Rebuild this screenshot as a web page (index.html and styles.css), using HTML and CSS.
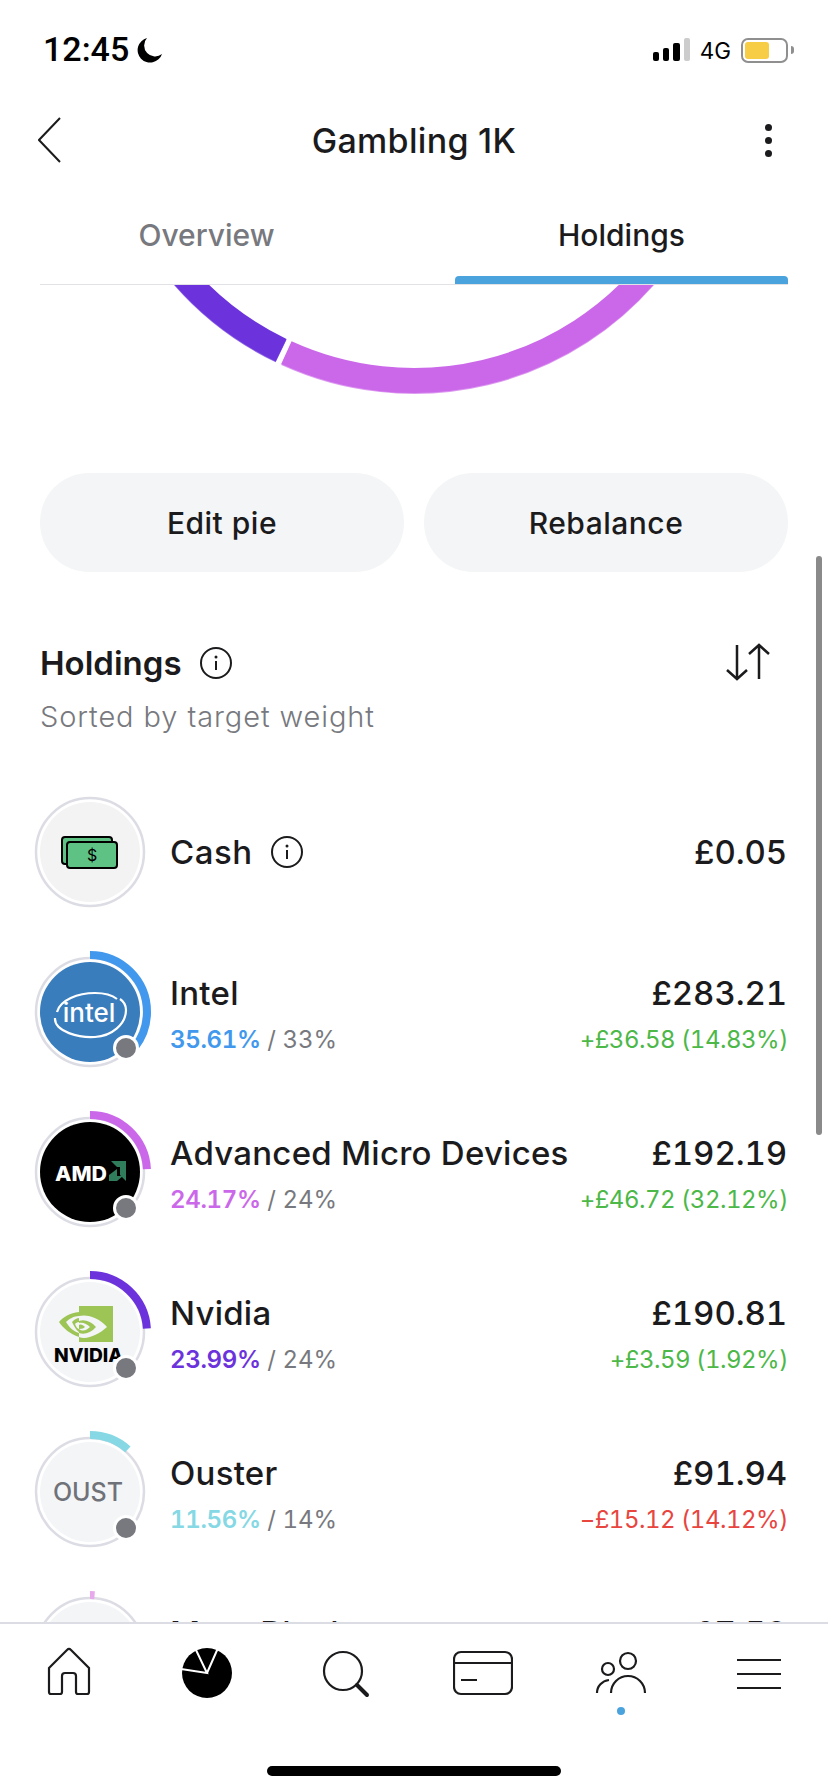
FILE: index.html
```html
<!DOCTYPE html>
<html lang="en">
<head>
    <meta charset="UTF-8">
    <meta name="viewport" content="width=device-width, initial-scale=1.0">
    <title>Gambling 1K</title>
    <link rel="stylesheet" href="styles.css">
</head>
<body>
<div class="phone">
    <!-- Status bar -->
    <header class="status-bar">
        <div class="status-left">
            <span class="clock">12:45</span>
            <svg class="moon" width="26" height="26" viewBox="0 0 26 26"><path d="M10 1 A12.5 12.5 0 1 0 25 17 A11 11 0 0 1 10 1 Z" fill="#000"/></svg>
        </div>
        <div class="status-right">
            <svg width="38" height="24" viewBox="0 0 38 24">
                <rect x="0" y="14" width="6" height="9" rx="2" fill="#000"/>
                <rect x="10" y="10" width="6" height="13" rx="2" fill="#000"/>
                <rect x="20" y="5" width="7" height="18" rx="2" fill="#000"/>
                <rect x="31" y="0" width="6" height="23" rx="2" fill="#ccc"/>
            </svg>
            <span class="network">4G</span>
            <div class="battery"><div class="battery-fill"></div></div>
            <div class="battery-nub"></div>
        </div>
    </header>

    <!-- Title -->
    <div class="title-bar">
        <svg class="back" width="24" height="46" viewBox="0 0 24 46"><path d="M22 1 L1 23 L22 45" fill="none" stroke="#1b1b1d" stroke-width="2"/></svg>
        <h1 class="title">Gambling 1K</h1>
        <div class="more"><span></span><span></span><span></span></div>
    </div>

    <!-- Tabs -->
    <nav class="tabs">
        <div class="tab">Overview</div>
        <div class="tab tab-active">Holdings<div class="tab-bar"></div></div>
    </nav>

    <main class="scroll">
        <div class="scrollbar"></div>

        <svg class="donut" width="828" height="115" viewBox="0 0 828 115" fill="none">
            <g transform="translate(0 0.9)">
                <path d="M174.3 -20 A306.5 306.5 0 0 0 281.1 65.2" stroke="#9670e6" stroke-width="25"/>
                <path d="M286.4 67.7 A306.5 306.5 0 0 0 653.7 -20" stroke="#dd9cf0" stroke-width="25"/>
            </g>
            <path d="M174.3 -20 A306.5 306.5 0 0 0 281.1 65.2" stroke="#6c33dd" stroke-width="25"/>
            <path d="M286.4 67.7 A306.5 306.5 0 0 0 653.7 -20" stroke="#cb68ea" stroke-width="25"/>
        </svg>

        <div class="actions">
            <button class="pill">Edit pie</button>
            <button class="pill">Rebalance</button>
        </div>

        <section class="holdings-head">
            <div>
                <div class="head-line">
                    <h2>Holdings</h2>
                    <svg class="info" width="32" height="32" viewBox="0 0 32 32"><circle cx="16" cy="16" r="15" fill="none" stroke="#1b1b1d" stroke-width="2"/><circle cx="16" cy="10" r="1.5" fill="#1b1b1d"/><path d="M16 14 V23" stroke="#1b1b1d" stroke-width="2"/></svg>
                </div>
                <p class="sorted">Sorted by target weight</p>
            </div>
            <svg class="sort" width="46" height="40" viewBox="0 0 46 40" fill="none" stroke="#1b1b1d" stroke-width="2.5">
                <path d="M11 2 V36 M1 27 L11 36 L21 27"/>
                <path d="M33 36 V2 M23 11 L33 2 L43 11"/>
            </svg>
        </section>

        <div class="rows">
            <!-- Cash -->
            <div class="row">
                <div class="avatar">
                    <svg width="130" height="130" viewBox="-65 -65 130 130">
                        <circle r="54" class="ring"/>
                        <circle r="50" fill="#f3f3f4"/>
                        <rect x="-28" y="-15" width="50" height="27" rx="3" fill="#5fc285" stroke="#000" stroke-width="2"/>
                        <rect x="-23" y="-10" width="50" height="26" rx="3" fill="#5fc285" stroke="#000" stroke-width="2"/>
                        <text x="2" y="9" class="cash-sign">$</text>
                    </svg>
                </div>
                <div class="cash-name">Cash
                    <svg class="info" width="32" height="32" viewBox="0 0 32 32"><circle cx="16" cy="16" r="15" fill="none" stroke="#1b1b1d" stroke-width="2"/><circle cx="16" cy="10" r="1.5" fill="#1b1b1d"/><path d="M16 14 V23" stroke="#1b1b1d" stroke-width="2"/></svg>
                </div>
                <div class="price">£0.05</div>
            </div>

            <!-- Intel -->
            <div class="row">
                <div class="avatar">
                    <svg width="130" height="130" viewBox="-65 -65 130 130">
                        <circle r="54" class="ring"/>
                        <circle r="50" fill="#3a7dbd"/>
                        <path d="M-33 0 C-30 -12 -12 -19 5 -19 C14 -19 22 -17 27 -13" fill="none" stroke="#fff" stroke-width="2.2"/>
                        <path d="M-35 6 C-36 20 -10 26 5 25 C22 24 36 12 36 -2 C36 -7 33 -11 30 -13" fill="none" stroke="#fff" stroke-width="2.2"/>
                        <text x="-1" y="10" class="logo-intel">intel</text>
                        <circle r="57" class="arc" stroke="#4198ec" stroke-dasharray="35.61 100" pathLength="100" transform="rotate(-90)"/>
                    </svg>
                    <span class="badge"></span>
                </div>
                <div class="row-text">
                    <div class="name">Intel</div>
                    <div class="sub"><b class="c-blue">35.61%</b> / 33%</div>
                </div>
                <div class="row-values">
                    <div class="price">£283.21</div>
                    <div class="change up">+£36.58 (14.83%)</div>
                </div>
            </div>

            <!-- AMD -->
            <div class="row">
                <div class="avatar">
                    <svg width="130" height="130" viewBox="-65 -65 130 130">
                        <circle r="54" class="ring"/>
                        <circle r="50" fill="#000"/>
                        <text x="-35" y="9" class="logo-amd" textLength="52" lengthAdjust="spacingAndGlyphs">AMD</text>
                        <path d="M21 -11 H36 V9 L30 3 V-5 H27 Z" fill="#2f7d5b"/>
                        <path d="M27 -3 V4 H33 L27 9 H19 V3 Z" fill="#2f7d5b"/>
                        <circle r="57" class="arc" stroke="#cb68ea" stroke-dasharray="24.17 100" pathLength="100" transform="rotate(-90)"/>
                    </svg>
                    <span class="badge"></span>
                </div>
                <div class="row-text">
                    <div class="name">Advanced Micro Devices</div>
                    <div class="sub"><b class="c-pink">24.17%</b> / 24%</div>
                </div>
                <div class="row-values">
                    <div class="price">£192.19</div>
                    <div class="change up">+£46.72 (32.12%)</div>
                </div>
            </div>

            <!-- Nvidia -->
            <div class="row">
                <div class="avatar">
                    <svg width="130" height="130" viewBox="-65 -65 130 130">
                        <circle r="54" class="ring"/>
                        <circle r="50" fill="#f4f5f7"/>
                        <rect x="-11" y="-26" width="34" height="36" fill="#9cc556"/>
                        <path d="M-11 -20 C-20 -19 -27 -15 -31 -10 C-27 -4 -20 2 -11 5 V1 C-17 -1 -21 -5 -24 -10 C-21 -13 -16 -16 -11 -16 Z" fill="#9cc556"/>
                        <path d="M-11 -16 C-2 -18 9 -14 17 -5 C8 3 -3 8 -11 5 V1 C-6 3 1 1 6 -5 C1 -11 -6 -13 -11 -11 Z" fill="#f4f5f7"/>
                        <path d="M-18 -10 C-15 -13 -13 -14 -11 -14 V-10 C-13 -10 -14 -9 -15 -8 C-14 -5 -12 -3 -11 -3 V0 C-14 -2 -16 -6 -18 -10 Z" fill="#9cc556"/>
                        <path d="M-11 -9 C-7 -10 -3 -8 0 -5 C-3 -2 -7 0 -11 -3 C-8 -3 -6 -4 -5 -5 C-7 -7 -9 -8 -11 -7 Z" fill="#f4f5f7"/>
                        <text x="-36" y="30" class="logo-nvidia" textLength="69" lengthAdjust="spacingAndGlyphs">NVIDIA</text>
                        <circle r="57" class="arc" stroke="#6c33dd" stroke-dasharray="23.99 100" pathLength="100" transform="rotate(-90)"/>
                    </svg>
                    <span class="badge"></span>
                </div>
                <div class="row-text">
                    <div class="name">Nvidia</div>
                    <div class="sub"><b class="c-purple">23.99%</b> / 24%</div>
                </div>
                <div class="row-values">
                    <div class="price">£190.81</div>
                    <div class="change up">+£3.59 (1.92%)</div>
                </div>
            </div>

            <!-- Ouster -->
            <div class="row">
                <div class="avatar">
                    <svg width="130" height="130" viewBox="-65 -65 130 130">
                        <circle r="54" class="ring"/>
                        <circle r="50" fill="#f4f5f7"/>
                        <text x="-2" y="9" class="logo-ticker">OUST</text>
                        <circle r="57" class="arc" stroke="#85d8e4" stroke-dasharray="11.56 100" pathLength="100" transform="rotate(-90)"/>
                    </svg>
                    <span class="badge"></span>
                </div>
                <div class="row-text">
                    <div class="name">Ouster</div>
                    <div class="sub"><b class="c-cyan">11.56%</b> / 14%</div>
                </div>
                <div class="row-values">
                    <div class="price">£91.94</div>
                    <div class="change down">−£15.12 (14.12%)</div>
                </div>
            </div>

            <!-- Cut off by the tab bar -->
            <div class="row">
                <div class="avatar">
                    <svg width="130" height="130" viewBox="-65 -65 130 130">
                        <circle r="54" class="ring"/>
                        <circle r="50" fill="#f4f5f7"/>
                        <circle r="57" class="arc" stroke="#e8a9ec" stroke-dasharray="1.3 100" pathLength="100" transform="rotate(-90)"/>
                    </svg>
                </div>
                <div class="row-text">
                    <div class="name">Mara Block</div>
                    <div class="sub">&nbsp;</div>
                </div>
                <div class="row-values">
                    <div class="price">£7.50</div>
                    <div class="change">&nbsp;</div>
                </div>
            </div>
        </div>
    </main>

    <!-- Bottom tab bar -->
    <footer class="bottom-bar">
        <div class="nav-icons">
            <div class="nav-item">
                <svg width="60" height="60" viewBox="-30 -30 60 60" class="line-icon"><path d="M-20 -5 L-2 -23 Q0 -25 2 -23 L20 -5 V19 Q20 21 18 21 H9 Q7 21 7 19 V3 Q7 0 4 0 H-4 Q-7 0 -7 3 V19 Q-7 21 -9 21 H-18 Q-20 21 -20 19 Z"/></svg>
            </div>
            <div class="nav-item">
                <svg width="60" height="60" viewBox="-30 -30 60 60"><circle r="25" fill="#000"/><path d="M-26 -4 L0 0 L-11 -23 M0 0 L11 -25" fill="none" stroke="#fff" stroke-width="2"/></svg>
            </div>
            <div class="nav-item">
                <svg width="60" height="60" viewBox="-30 -30 60 60" class="line-icon"><circle cx="-2" cy="-2" r="19"/><path d="M12 12 L22 22" stroke-width="4" stroke-linecap="round"/></svg>
            </div>
            <div class="nav-item">
                <svg width="60" height="60" viewBox="-30 -30 60 60" class="line-icon"><rect x="-29" y="-21" width="58" height="42" rx="7"/><path d="M-29 -10 H29 M-22 7 H-6"/></svg>
            </div>
            <div class="nav-item">
                <svg width="60" height="60" viewBox="-30 -30 60 60" class="line-icon"><circle cx="7" cy="-12" r="8"/><path d="M-10 20 A17 17 0 0 1 24 20"/><circle cx="-13" cy="-4" r="6"/><path d="M-24 20 C-24 13 -19 8 -12 7"/></svg>
                <span class="nav-dot"></span>
            </div>
            <div class="nav-item">
                <svg width="60" height="60" viewBox="-30 -30 60 60" class="line-icon"><path d="M-22 -13 H22 M-22 1 H22 M-22 15 H22"/></svg>
            </div>
        </div>
        <div class="home-bar"></div>
    </footer>
</div>
</body>
</html>
```

FILE: styles.css
```css
/* Basic page */
* {
    box-sizing: border-box;
}
body {
    margin: 0;
    background: #fff;
    color: #1b1b1d;
    font-family: Inter, "Noto Sans", sans-serif;
}
h1, h2, p {
    margin: 0;
    font-weight: 500;
}
.phone {
    width: 828px;
    height: 1792px;
    display: flex;
    flex-direction: column;
    overflow: hidden;
}

/* Status bar */
.status-bar {
    height: 100px;
    flex-shrink: 0;
    display: flex;
    align-items: center;
    justify-content: space-between;
    padding: 0 34px 0 43px;
}
.status-left {
    display: flex;
    align-items: center;
    gap: 8px;
}
.clock {
    font-family: Roboto, sans-serif;
    font-size: 34px;
    font-weight: 500;
    color: #000;
    position: relative;
    top: -1px;
}
.status-right {
    display: flex;
    align-items: center;
}
.network {
    font-size: 22.5px;
    margin: 0 10px 0 9px;
    color: #000;
}
.battery {
    width: 47px;
    height: 25px;
    border: 2px solid #8f8f8f;
    border-radius: 7px;
    padding: 2px;
}
.battery-fill {
    width: 24px;
    height: 17px;
    background: #f6cd45;
    border-radius: 3px;
}
.battery-nub {
    width: 3px;
    height: 8px;
    margin-left: 3px;
    background: #8f8f8f;
    border-radius: 0 3px 3px 0;
}

/* Title */
.title-bar {
    height: 80px;
    flex-shrink: 0;
    display: grid;
    grid-template-columns: 1fr auto 1fr;
    align-items: center;
    padding: 0 38px;
}
.title {
    font-size: 34px;
    letter-spacing: 0.3px;
}
.more {
    justify-self: end;
    display: flex;
    flex-direction: column;
    gap: 6px;
    margin-right: 18px;
}
.more span {
    width: 7px;
    height: 7px;
    background: #1b1b1d;
    border-radius: 50%;
}

/* Tabs */
.tabs {
    height: 105px;
    flex-shrink: 0;
    margin: 0 40px;
    display: grid;
    grid-template-columns: 1fr 1fr;
    column-gap: 82px;
    border-bottom: 1px solid #e2e2e6;
}
.tab {
    display: flex;
    flex-direction: column;
    padding-top: 37px;
    text-align: center;
    font-size: 30px;
    font-weight: 500;
    color: #77797e;
}
.tab-active {
    color: #1b1b1d;
}
.tab-bar {
    height: 8px;
    margin-top: auto;
    background: #4ba3de;
    border-radius: 4px 4px 0 0;
}

/* Scroll area */
.scroll {
    position: relative;
    flex: 1;
    min-height: 0;
    overflow: hidden;
}
.scrollbar {
    position: absolute;
    top: 271px;
    left: 816px;
    width: 6px;
    height: 579px;
    background: #8a8a8a;
    border-radius: 3px;
}
.donut {
    display: block;
}
.actions {
    margin: 73px 40px 0;
    display: grid;
    grid-template-columns: 1fr 1fr;
    gap: 20px;
}
.pill {
    height: 99px;
    border: none;
    border-radius: 49px;
    background: #f4f5f6;
    color: #1b1b1d;
    font-family: inherit;
    font-size: 30px;
    font-weight: 500;
    letter-spacing: 0.5px;
}
.holdings-head {
    margin: 71px 56px 0 40px;
    display: flex;
    justify-content: space-between;
}
.head-line {
    display: flex;
    align-items: center;
    gap: 18px;
    height: 40px;
}
.head-line h2 {
    font-size: 33px;
    font-weight: 600;
}
.sorted {
    margin-top: 16px;
    font-size: 29px;
    font-weight: 300;
    letter-spacing: 0.9px;
    line-height: 36px;
    color: #77797e;
}

/* Rows */
.rows {
    margin-top: 37px;
}
.row {
    height: 160px;
    display: flex;
    align-items: center;
    padding: 0 41px 0 25px;
    gap: 15px;
}
.avatar {
    position: relative;
    width: 130px;
    height: 130px;
    flex-shrink: 0;
}
.avatar svg {
    display: block;
}
.ring {
    fill: #fff;
    stroke: #dcdce4;
    stroke-width: 2.5;
}
.arc {
    fill: none;
    stroke-width: 8;
}
.badge {
    position: absolute;
    left: 88px;
    top: 88px;
    width: 26px;
    height: 26px;
    background: #77797f;
    border: 3px solid #fff;
    border-radius: 50%;
}
.cash-sign {
    font-size: 16px;
    font-weight: 400;
    text-anchor: middle;
}
.logo-intel {
    font-size: 26px;
    font-weight: 500;
    fill: #fff;
    text-anchor: middle;
}
.logo-amd {
    font-size: 20px;
    font-weight: 800;
    fill: #fff;
}
.logo-nvidia {
    font-size: 19px;
    font-weight: 800;
    fill: #000;
}
.logo-ticker {
    font-size: 25px;
    font-weight: 500;
    fill: #6f7278;
    text-anchor: middle;
}
.cash-name {
    flex: 1;
    display: flex;
    align-items: center;
    gap: 18px;
    font-size: 33px;
    font-weight: 500;
    letter-spacing: 0.5px;
}
.row-text {
    flex: 1;
    padding-top: 5px;
    min-width: 0;
    white-space: nowrap;
}
.name {
    font-size: 33px;
    font-weight: 500;
    letter-spacing: 0.25px;
    line-height: 40px;
}
.sub {
    margin-top: 11px;
    font-size: 24px;
    font-variant-numeric: tabular-nums;
    line-height: 32px;
    color: #77797e;
}
.sub b {
    font-weight: 600;
    letter-spacing: -0.3px;
}
.c-blue { color: #4198ec; }
.c-pink { color: #cb68ea; }
.c-purple { color: #6c33dd; }
.c-cyan { color: #85d8e4; }
.row-values {
    padding-top: 5px;
    text-align: right;
    white-space: nowrap;
}
.price {
    font-size: 33px;
    font-weight: 500;
    font-variant-numeric: tabular-nums;
    letter-spacing: -0.1px;
    line-height: 40px;
}
.change {
    margin-top: 11px;
    margin-right: -1px;
    font-size: 24px;
    font-variant-numeric: tabular-nums;
    letter-spacing: -0.5px;
    line-height: 32px;
}
.up { color: #4cb848; }
.down { color: #e8453f; }

/* Bottom bar */
.bottom-bar {
    height: 170px;
    flex-shrink: 0;
    position: relative;
    z-index: 1;
    display: flex;
    flex-direction: column;
    background: #fff;
    border-top: 2px solid #dcdce4;
}
.nav-icons {
    display: grid;
    grid-template-columns: repeat(6, 1fr);
    padding-top: 19px;
}
.nav-item {
    display: flex;
    flex-direction: column;
    align-items: center;
}
.line-icon {
    fill: none;
    stroke: #1b1b1d;
    stroke-width: 2.2;
}
.nav-dot {
    width: 8px;
    height: 8px;
    margin-top: 4px;
    border-radius: 50%;
    background: #4ba3de;
}
.home-bar {
    width: 294px;
    height: 10px;
    margin: auto auto 16px;
    border-radius: 5px;
    background: #000;
}
```
